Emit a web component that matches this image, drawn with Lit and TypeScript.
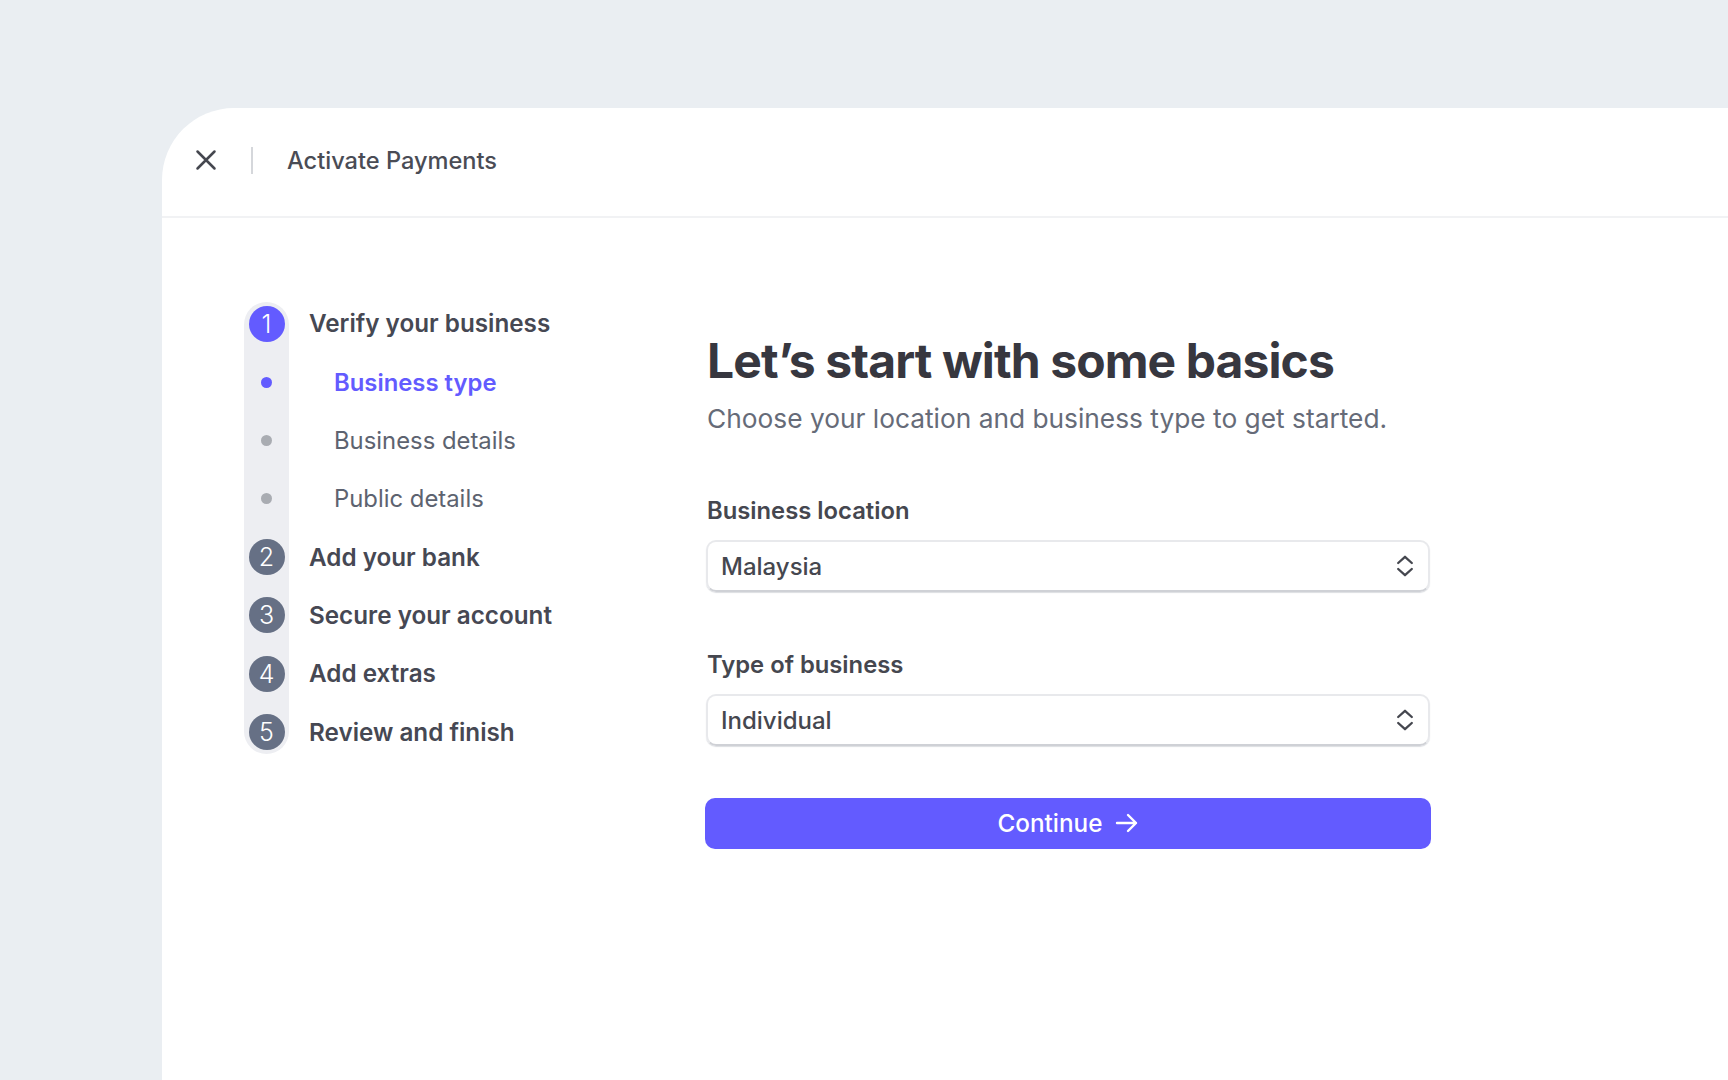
import { LitElement, html, css, svg } from "lit";
import { customElement } from "lit/decorators.js";

const chevrons = html`<svg class="chev" viewBox="0 0 18 24" width="18" height="24" fill="none" stroke="#45474f" stroke-width="2.3" stroke-linecap="round" stroke-linejoin="round">${svg`<path d="M2.200 9 9 2.800 15.800 9"/><path d="M2.200 15 9 21.200 15.800 15"/>`}</svg>`;

@customElement("app-root")
export class AppRoot extends LitElement {
  static styles = css`
    :host { display: block; width: 1728px; height: 1080px; background: #eaeef2; overflow: hidden; font-family: Inter, "Liberation Sans", sans-serif; box-sizing: border-box; padding: 108px 0 0 162px; }
    .panel { background: #fff; height: 972px; border-top-left-radius: 72px; }
    header { height: 110px; box-sizing: border-box; border-bottom: 2px solid #f1f2f4; display: flex; align-items: center; padding: 0 0 4px 33px; }
    .x { display: block; }
    .sep { width: 2px; height: 27px; background: #d5d7db; margin: 0 34px 0 34px; }
    .title { font-size: 23.600px; font-weight: 500; color: #4a4c55; }
    .body { display: flex; padding-top: 83.700px; padding-left: 82px; align-items: flex-start; }
    .steps { position: relative; width: 461px; flex: none; display: flex; flex-direction: column; gap: 14.350px; }
    .steps::before { content: ""; position: absolute; left: 0; top: 0; bottom: 0; width: 45px; border-radius: 22.500px; background: #edeef2; }
    .row { position: relative; height: 44px; display: flex; align-items: center; }
    .marker { width: 45px; flex: none; display: flex; justify-content: center; }
    .num { width: 36px; height: 36px; border-radius: 50%; background: #667085; color: #fff; font-size: 25px; font-weight: 300; display: flex; align-items: center; justify-content: center; }
    .num.on { background: #635bff; }
    .dot { width: 11px; height: 11px; border-radius: 50%; background: #a9acb2; }
    .dot.on { background: #635bff; }
    .main { margin-left: 20px; font-size: 24.250px; font-weight: 600; color: #464853; }
    .sub { margin-left: 45px; font-size: 23.850px; font-weight: 400; color: #5d6370; }
    .sub.on { color: #635bff; font-weight: 600; }
    form { width: 726px; padding-top: 29px; display: flex; flex-direction: column; }
    h1 { margin: 0 0 0 2px; font-size: 48px; line-height: 60px; font-weight: 750; letter-spacing: -0.900px; color: #37373f; }
    .lead { margin: 11px 0 0 2px; font-size: 26.300px; line-height: 34px; color: #666b78; }
    label { margin: 60px 0 0 2px; font-size: 23.800px; line-height: 30px; font-weight: 600; color: #45474f; }
    label.second { margin-top: 58px; }
    .select { margin: 14px 1px 0; height: 52px; box-sizing: border-box; border-radius: 10px; border: 2px solid #e8e9ec; border-bottom-color: #cfd1d6; box-shadow: 0 1px 1px #dcdee2; padding: 0 14px 0 13px; display: flex; align-items: center; justify-content: space-between; font-size: 24px; font-weight: 550; color: #45474f; }
    .select span { padding-top: 2px; }
    .chev { display: block; }
    button { margin-top: 52px; height: 51px; border: none; border-radius: 10px; background: #635bff; color: #fff; font: 500 24.300px Inter, "Liberation Sans", sans-serif; display: flex; align-items: center; justify-content: center; gap: 12px; padding: 0; }
  `;

  render() {
    return html`<div class="panel">
      <header>
        <svg class="x" width="22" height="22" viewBox="0 0 22 22" fill="none" stroke="#45474f" stroke-width="2.500" stroke-linecap="round"><path d="M2.500 2.500l17 17M19.500 2.500l-17 17"/></svg>
        <div class="sep"></div>
        <div class="title">Activate Payments</div>
      </header>
      <div class="body">
        <div class="steps">
          <div class="row"><div class="marker"><div class="num on">1</div></div><div class="main">Verify your business</div></div>
          <div class="row"><div class="marker"><div class="dot on"></div></div><div class="sub on">Business type</div></div>
          <div class="row"><div class="marker"><div class="dot"></div></div><div class="sub">Business details</div></div>
          <div class="row"><div class="marker"><div class="dot"></div></div><div class="sub">Public details</div></div>
          <div class="row"><div class="marker"><div class="num">2</div></div><div class="main">Add your bank</div></div>
          <div class="row"><div class="marker"><div class="num">3</div></div><div class="main">Secure your account</div></div>
          <div class="row"><div class="marker"><div class="num">4</div></div><div class="main">Add extras</div></div>
          <div class="row"><div class="marker"><div class="num">5</div></div><div class="main">Review and finish</div></div>
        </div>
        <form>
          <h1>Let’s start with some basics</h1>
          <p class="lead">Choose your location and business type to get started.</p>
          <label>Business location</label>
          <div class="select"><span>Malaysia</span>${chevrons}</div>
          <label class="second">Type of business</label>
          <div class="select"><span>Individual</span>${chevrons}</div>
          <button type="button"><span>Continue</span><svg width="24" height="22" viewBox="0 0 24 22" fill="none" stroke="#fff" stroke-width="2.400" stroke-linecap="round" stroke-linejoin="round"><path d="M2 11h19M13 3l8 8-8 8"/></svg></button>
        </form>
      </div>
    </div>`;
  }
}
